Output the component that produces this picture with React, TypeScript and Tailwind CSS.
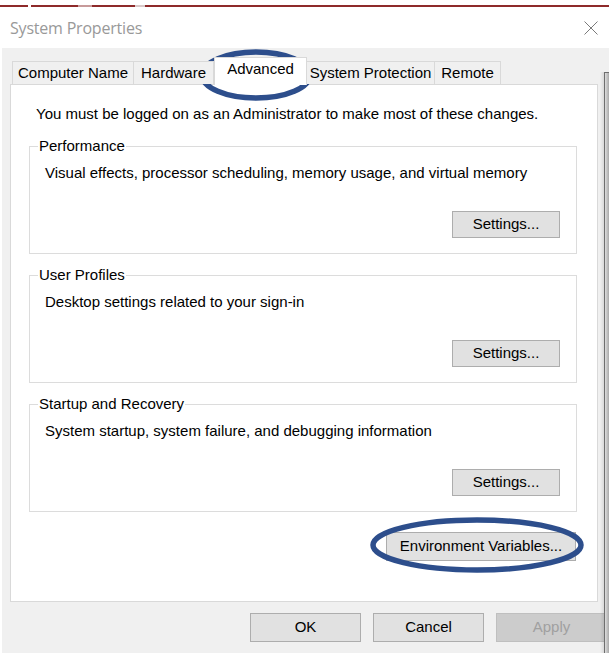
const tabs = [
  { label: 'Computer Name', w: 'w-[122px]' },
  { label: 'Hardware', w: 'w-[80px]' },
  { label: 'Advanced', w: 'w-[93px]', active: true },
  { label: 'System Protection', w: 'w-[128px]' },
  { label: 'Remote', w: 'w-[66px]' },
]

const groups = [
  { title: 'Performance', text: 'Visual effects, processor scheduling, memory usage, and virtual memory' },
  { title: 'User Profiles', text: 'Desktop settings related to your sign-in' },
  { title: 'Startup and Recovery', text: 'System startup, system failure, and debugging information' },
]

function WinButton({ children, className = '', disabled = false }: { children: React.ReactNode; className?: string; disabled?: boolean }) {
  return (
    <button
      className={
        'flex items-center justify-center border text-[15px] ' +
        (disabled ? 'bg-[#cccccc] border-[#bfbfbf] text-[#a0a0a0] ' : 'bg-[#e1e1e1] border-[#adadad] text-black ') +
        className
      }
    >
      {children}
    </button>
  )
}

function Group({ title, text }: { title: string; text: string }) {
  return (
    <fieldset className="border border-[#dcdcdc] mt-[12px] first:mt-0">
      <legend className="ml-[8px] px-[1px] leading-[18px]">{title}</legend>
      <div className="pt-[9px] pb-[15px] pl-[15px] pr-[16px]">
        <p className="leading-[18px]">{text}</p>
        <div className="flex justify-end mt-[29px]">
          <WinButton className="w-[108px] h-[27px]">Settings...</WinButton>
        </div>
      </div>
    </fieldset>
  )
}

export default function App() {
  return (
    <div className="relative w-[609px] h-[653px] overflow-hidden bg-white text-[15px] text-black font-['Liberation_Sans',Arial,sans-serif]">
      {/* strip of the window behind */}
      <div className="flex mt-[5px] h-[2px]">
        <div className="w-[28px] bg-[#8e2a2a]" />
        <div className="w-[3px]" />
        <div className="w-[47px] bg-[#8e2a2a]" />
        <div className="w-[14px] bg-[#c79a9a]" />
        <div className="w-[43px] bg-[#8e2a2a]" />
        <div className="w-[10px] bg-[#d8c8c8]" />
        <div className="flex-1 bg-[#8e2a2a]" />
      </div>

      {/* title bar */}
      <div className="flex items-center justify-between h-[41px] pl-[10px] pr-[11px]">
        <span className="text-[16px] text-[#999999] font-['Open_Sans',sans-serif] tracking-[-0.2px]">System Properties</span>
        <svg width="14" height="14" viewBox="0 0 14 14" className="text-[#7a7a7a]">
          <path d="M0.5 0.5 L13.5 13.5 M13.5 0.5 L0.5 13.5" stroke="currentColor" strokeWidth="1" fill="none" />
        </svg>
      </div>

      <div className="ml-[2px] h-[605px] bg-[#f0f0f0] flex flex-col">
        {/* tabs */}
        <div className="relative z-10 flex items-end pt-[9px] pl-[10px] -mb-px">
          {tabs.map((t, i) =>
            t.active ? (
              <div key={t.label} className={`${t.w} h-[28px] bg-white border-x border-t border-[#d9d9d9] flex items-center justify-center pb-[4px]`}>
                {t.label}
              </div>
            ) : (
              <div
                key={t.label}
                className={`${t.w} h-[23px] mb-px bg-[#f0f0f0] border-t border-r border-[#d9d9d9] ${i === 0 ? 'border-l' : ''} flex items-center justify-center`}
              >
                {t.label}
              </div>
            )
          )}
        </div>

        {/* tab page */}
        <div className="ml-[8px] w-[588px] h-[518px] bg-white border border-[#d9d9d9] pt-[20px] pl-[25px]">
          <p className="leading-[18px]">You must be logged on as an Administrator to make most of these changes.</p>
          <div className="ml-[-7px] mt-[14px] w-[548px]">
            {groups.map((g) => (
              <Group key={g.title} title={g.title} text={g.text} />
            ))}
            <div className="flex justify-end mt-[20px] pr-px">
              <WinButton className="w-[190px] h-[29px]">Environment Variables...</WinButton>
            </div>
          </div>
        </div>

        {/* dialog buttons */}
        <div className="flex gap-[12px] mt-[11px] pl-[248px]">
          <WinButton className="w-[111px] h-[29px] shrink-0">OK</WinButton>
          <WinButton className="w-[111px] h-[29px] shrink-0">Cancel</WinButton>
          <WinButton disabled className="w-[111px] h-[29px] shrink-0">Apply</WinButton>
        </div>
      </div>

      {/* edge of another window lying over the dialog */}
      <div className="absolute left-[600px] top-[72px] bottom-0 w-[9px] flex">
        <div className="w-[4px] bg-gradient-to-r from-transparent to-[#00000018]" />
        <div className="flex-1 border-l border-t border-[#6e6e6e] bg-gradient-to-r from-[#dedede] to-[#a9a9a9]" />
      </div>

      {/* hand-drawn highlight rings */}
      <svg className="absolute left-[198px] top-[47px]" width="118" height="56" viewBox="0 0 118 56">
        <ellipse cx="58" cy="28" rx="54" ry="23" fill="none" stroke="#2d4e8c" strokeWidth="5.5" />
      </svg>
      <svg className="absolute left-[367px] top-[514px]" width="220" height="62" viewBox="0 0 220 62">
        <ellipse cx="110" cy="31" rx="104" ry="25" fill="none" stroke="#2d4e8c" strokeWidth="5.5" />
      </svg>
    </div>
  )
}
